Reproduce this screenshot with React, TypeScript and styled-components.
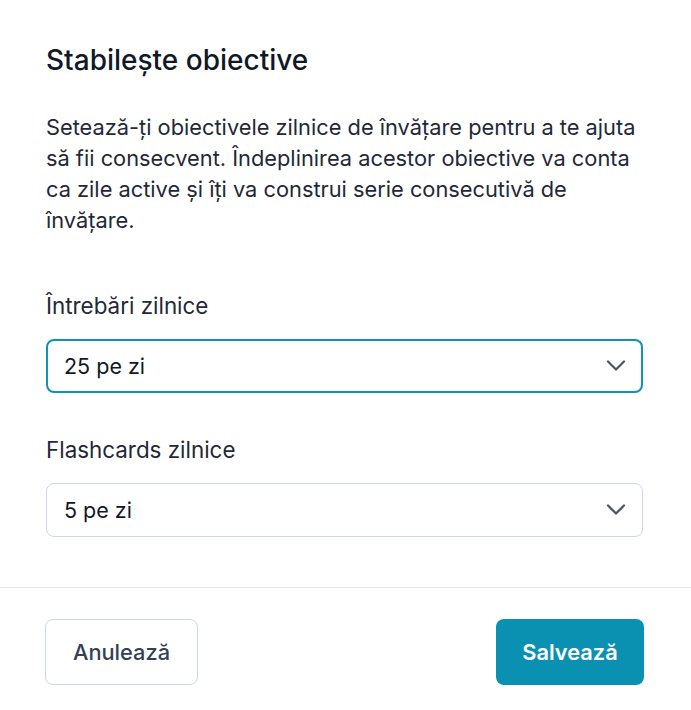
import React from "react";
import styled, { createGlobalStyle } from "styled-components";

const Global = createGlobalStyle`
  html, body { margin: 0; padding: 0; background: #ffffff; }
  * { box-sizing: border-box; }
`;

const Modal = styled.div`
  width: 691px;
  height: 710px;
  background: #fff;
  border-radius: 8px;
  display: flex;
  flex-direction: column;
  font-family: Inter, "Liberation Sans", sans-serif;
  color: #111827;
`;

const Body = styled.div`
  padding: 42px 48px 0 46px;
  display: flex;
  flex-direction: column;
`;

const Title = styled.h2`
  margin: 0;
  font-family: Inter, sans-serif;
  font-weight: 500;
  font-size: 28px;
  line-height: 36px;
  color: #111827;
`;

const Description = styled.p`
  margin: 34px 0 0 0;
  font-family: Inter, sans-serif;
  font-size: 21.8px;
  line-height: 31px;
  color: #1f2937;
`;

const Field = styled.div<{ $top: number }>`
  margin-top: ${(p) => p.$top}px;
  display: flex;
  flex-direction: column;
  gap: 18px;
`;

const Label = styled.label`
  font-family: Inter, sans-serif;
  font-size: 22.4px;
  line-height: 30px;
  color: #1f2937;
`;

const Select = styled.div<{ $focused?: boolean }>`
  height: 54px;
  border-radius: 8px;
  border: ${(p) => (p.$focused ? "2px solid #0e93b4" : "1px solid #cfd8e3")};
  padding: 0 ${(p) => (p.$focused ? 15 : 16)}px 0 ${(p) => (p.$focused ? 16 : 17)}px;
  display: flex;
  align-items: center;
  justify-content: space-between;
  font-family: Inter, sans-serif;
  font-size: 21.5px;
  color: #111827;
`;

const Divider = styled.div`
  margin-top: 50px;
  height: 1px;
  background: #e2e8f0;
`;

const Footer = styled.div`
  padding: 31px 47px 0 45px;
  display: flex;
  justify-content: space-between;
`;

const Button = styled.button<{ $primary?: boolean }>`
  height: 66px;
  width: ${(p) => (p.$primary ? 148 : 153)}px;
  border-radius: 8px;
  font-family: Inter, sans-serif;
  font-size: 21.8px;
  font-weight: ${(p) => (p.$primary ? 600 : 500)};
  border: ${(p) => (p.$primary ? "none" : "1px solid #cdd6e2")};
  background: ${(p) => (p.$primary ? "#0a91b1" : "#fff")};
  color: ${(p) => (p.$primary ? "#ffffff" : "#334155")};
  cursor: pointer;
`;

const Chevron = () => (
  <svg width="20" height="12" viewBox="0 0 20 12" fill="none" stroke="#475569" strokeWidth="2.2" strokeLinecap="round" strokeLinejoin="round">
    <path d="M2 1.5L10 9.5L18 1.5" />
  </svg>
);

export default function App() {
  return (
    <>
      <Global />
      <Modal>
        <Body>
          <Title>Stabilește obiective</Title>
          <Description>
            Setează-ți obiectivele zilnice de învățare pentru a te ajuta să fii consecvent. Îndeplinirea acestor obiective va conta ca zile active și îți va construi serie consecutivă de învățare.
          </Description>
          <Field $top={55}>
            <Label>Întrebări zilnice</Label>
            <Select $focused>
              <span>25 pe zi</span>
              <Chevron />
            </Select>
          </Field>
          <Field $top={42}>
            <Label>Flashcards zilnice</Label>
            <Select>
              <span>5 pe zi</span>
              <Chevron />
            </Select>
          </Field>
        </Body>
        <Divider />
        <Footer>
          <Button>Anulează</Button>
          <Button $primary>Salvează</Button>
        </Footer>
      </Modal>
    </>
  );
}
